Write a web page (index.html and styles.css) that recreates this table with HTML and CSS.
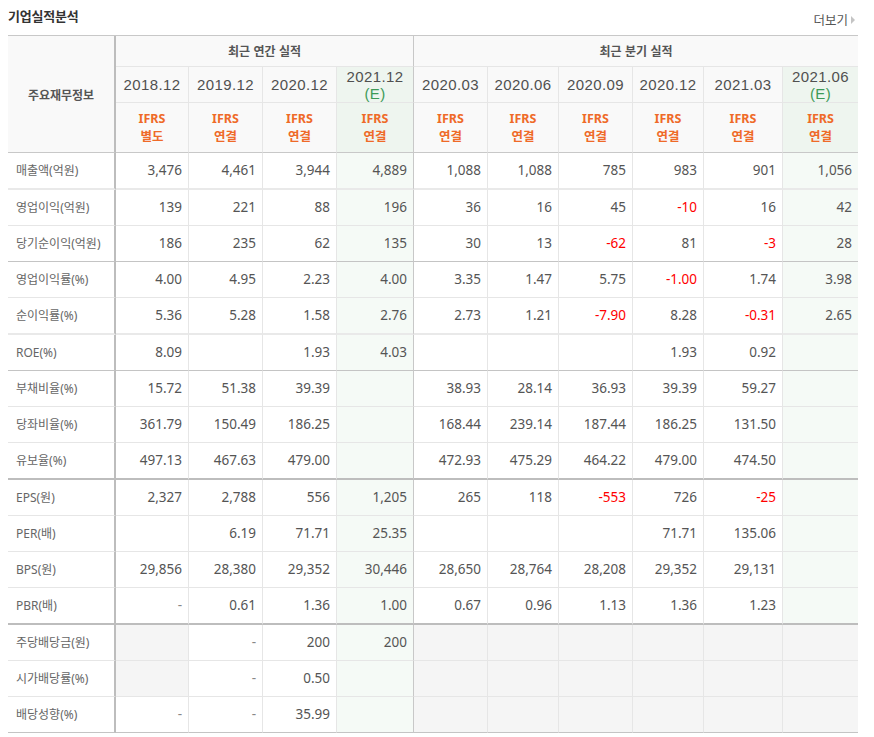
FILE: index.html
```html
<!DOCTYPE html>
<html lang="ko">
<head>
<meta charset="utf-8">
<title>기업실적분석</title>
<link rel="stylesheet" href="styles.css">
</head>
<body>
<div class="wrap">
  <div class="top">
    <h3 class="title">기업실적분석</h3>
    <a class="more">더보기<span class="tri"></span></a>
  </div>
  <table class="fin">
    <colgroup>
      <col style="width:108px"><col style="width:73px"><col style="width:74px"><col style="width:74px"><col style="width:77px">
      <col style="width:74px"><col style="width:71px"><col style="width:74px"><col style="width:71px"><col style="width:79px"><col style="width:75px">
    </colgroup>
    <thead>
      <tr class="h1">
        <th rowspan="3" class="corner">주요재무정보</th>
        <th colspan="4" class="grp">최근 연간 실적</th>
        <th colspan="6" class="grp last">최근 분기 실적</th>
      </tr>
      <tr class="h2">
        <th>2018.12</th><th>2019.12</th><th>2020.12</th><th class="e split"><div>2021.12</div><div class="est">(E)</div></th>
        <th>2020.03</th><th>2020.06</th><th>2020.09</th><th>2020.12</th><th>2021.03</th><th class="e last"><div>2021.06</div><div class="est">(E)</div></th>
      </tr>
      <tr class="h3">
        <th>IFRS<br>별도</th><th>IFRS<br>연결</th><th>IFRS<br>연결</th><th class="e split">IFRS<br>연결</th>
        <th>IFRS<br>연결</th><th>IFRS<br>연결</th><th>IFRS<br>연결</th><th>IFRS<br>연결</th><th>IFRS<br>연결</th><th class="e last">IFRS<br>연결</th>
      </tr>
    </thead>
    <tbody>
      <tr class="l2">
        <th>매출액(억원)</th><td>3,476</td><td>4,461</td><td>3,944</td><td class="e split">4,889</td>
        <td>1,088</td><td>1,088</td><td>785</td><td>983</td><td>901</td><td class="e last">1,056</td>
      </tr>
      <tr>
        <th>영업이익(억원)</th><td>139</td><td>221</td><td>88</td><td class="e split">196</td>
        <td>36</td><td>16</td><td>45</td><td class="neg">-10</td><td>16</td><td class="e last">42</td>
      </tr>
      <tr class="d1">
        <th>당기순이익(억원)</th><td>186</td><td>235</td><td>62</td><td class="e split">135</td>
        <td>30</td><td>13</td><td class="neg">-62</td><td>81</td><td class="neg">-3</td><td class="e last">28</td>
      </tr>
      <tr>
        <th>영업이익률(%)</th><td>4.00</td><td>4.95</td><td>2.23</td><td class="e split">4.00</td>
        <td>3.35</td><td>1.47</td><td>5.75</td><td class="neg">-1.00</td><td>1.74</td><td class="e last">3.98</td>
      </tr>
      <tr class="l2">
        <th>순이익률(%)</th><td>5.36</td><td>5.28</td><td>1.58</td><td class="e split">2.76</td>
        <td>2.73</td><td>1.21</td><td class="neg">-7.90</td><td>8.28</td><td class="neg">-0.31</td><td class="e last">2.65</td>
      </tr>
      <tr class="d1">
        <th>ROE(%)</th><td>8.09</td><td></td><td>1.93</td><td class="e split">4.03</td>
        <td></td><td></td><td></td><td>1.93</td><td>0.92</td><td class="e last"></td>
      </tr>
      <tr>
        <th>부채비율(%)</th><td>15.72</td><td>51.38</td><td>39.39</td><td class="e split"></td>
        <td>38.93</td><td>28.14</td><td>36.93</td><td>39.39</td><td>59.27</td><td class="e last"></td>
      </tr>
      <tr>
        <th>당좌비율(%)</th><td>361.79</td><td>150.49</td><td>186.25</td><td class="e split"></td>
        <td>168.44</td><td>239.14</td><td>187.44</td><td>186.25</td><td>131.50</td><td class="e last"></td>
      </tr>
      <tr class="d2">
        <th>유보율(%)</th><td>497.13</td><td>467.63</td><td>479.00</td><td class="e split"></td>
        <td>472.93</td><td>475.29</td><td>464.22</td><td>479.00</td><td>474.50</td><td class="e last"></td>
      </tr>
      <tr>
        <th>EPS(원)</th><td>2,327</td><td>2,788</td><td>556</td><td class="e split">1,205</td>
        <td>265</td><td>118</td><td class="neg">-553</td><td>726</td><td class="neg">-25</td><td class="e last"></td>
      </tr>
      <tr>
        <th>PER(배)</th><td></td><td>6.19</td><td>71.71</td><td class="e split">25.35</td>
        <td></td><td></td><td></td><td>71.71</td><td>135.06</td><td class="e last"></td>
      </tr>
      <tr>
        <th>BPS(원)</th><td>29,856</td><td>28,380</td><td>29,352</td><td class="e split">30,446</td>
        <td>28,650</td><td>28,764</td><td>28,208</td><td>29,352</td><td>29,131</td><td class="e last"></td>
      </tr>
      <tr class="d2">
        <th>PBR(배)</th><td class="dash">-</td><td>0.61</td><td>1.36</td><td class="e split">1.00</td>
        <td>0.67</td><td>0.96</td><td>1.13</td><td>1.36</td><td>1.23</td><td class="e last"></td>
      </tr>
      <tr>
        <th>주당배당금(원)</th><td class="g"></td><td class="dash">-</td><td>200</td><td class="e split">200</td>
        <td class="g"></td><td class="g"></td><td class="g"></td><td class="g"></td><td class="g"></td><td class="g last"></td>
      </tr>
      <tr>
        <th>시가배당률(%)</th><td class="g"></td><td class="dash">-</td><td>0.50</td><td class="e split"></td>
        <td class="g"></td><td class="g"></td><td class="g"></td><td class="g"></td><td class="g"></td><td class="g last"></td>
      </tr>
      <tr class="end">
        <th>배당성향(%)</th><td class="dash">-</td><td class="dash">-</td><td>35.99</td><td class="e split"></td>
        <td class="g"></td><td class="g"></td><td class="g"></td><td class="g"></td><td class="g"></td><td class="g last"></td>
      </tr>
    </tbody>
  </table>
</div>
</body>
</html>
```

FILE: styles.css
```css
body {
  margin: 8px;
  background: #fff;
  font-family: "Noto Sans", "Noto Sans CJK KR", sans-serif;
  color: #555;
}
.wrap {
  width: 850px;
}
.top {
  display: flex;
  justify-content: space-between;
  align-items: flex-start;
  height: 27px;
}
.title {
  margin: 0;
  font-family: "Noto Sans CJK KR", sans-serif;
  font-size: 13px;
  line-height: 15px;
  font-weight: 700;
  color: #333;
  letter-spacing: -0.2px;
}
.more {
  display: flex;
  align-items: center;
  margin-top: 5px;
  margin-right: 3px;
  font-family: "Noto Sans CJK KR", sans-serif;
  font-size: 12.5px;
  line-height: 14px;
  color: #555;
  text-decoration: none;
}
.tri {
  display: inline-block;
  width: 0;
  height: 0;
  margin-left: 3px;
  border-left: 4px solid #c4c4c4;
  border-top: 4px solid transparent;
  border-bottom: 4px solid transparent;
}
.fin {
  table-layout: fixed;
  width: 850px;
  border-collapse: separate;
  border-spacing: 0;
  border-top: 1px solid #c8c8c8;
}
.fin th,
.fin td {
  padding: 0;
  border-right: 1px solid #e6e6e6;
  border-bottom: 1px solid #e6e6e6;
  white-space: nowrap;
  overflow: hidden;
}
.fin thead th {
  background: #f9f9f9;
  text-align: center;
  font-weight: 400;
}
.fin thead th.e { background: #eef5ef; }
.fin .last { border-right: none; }
.fin .split { border-right: 1px solid #c8c8c8; }
.fin thead .corner {
  border-right: 2px solid #bdbdbd;
  border-bottom: 1px solid #c8c8c8;
  font-family: "Noto Sans CJK KR", sans-serif;
  font-size: 12px;
  font-weight: 700;
  color: #555;
  vertical-align: middle;
}
.fin .h1 th.grp {
  height: 30px;
  font-family: "Noto Sans CJK KR", sans-serif;
  font-size: 12px;
  font-weight: 700;
  color: #555;
  line-height: 30px;
}
.fin .h1 th.grp:nth-child(2) { border-right: 1px solid #c8c8c8; }
.fin .h2 th {
  height: 35px;
  font-family: "Liberation Sans", sans-serif;
  font-size: 15px;
  color: #505050;
  line-height: 17px;
  letter-spacing: 0.4px;
}
.fin .h2 th .est {
  color: #3d9a57;
}
.fin .h3 th {
  height: 49px;
  font-size: 12.5px;
  font-weight: 700;
  line-height: 17.5px;
  color: #ef6a28;
  border-bottom: 1px solid #c8c8c8;
}
.fin tbody th {
  text-align: left;
  padding-left: 8px;
  font-family: "Noto Sans", "Noto Sans CJK KR", sans-serif;
  font-size: 12px;
  font-weight: 400;
  color: #666;
  line-height: 35px;
  border-right: 2px solid #bdbdbd;
}
.fin tbody td {
  text-align: right;
  padding-right: 6px;
  font-size: 13.5px;
  line-height: 35px;
  color: #555;
}
.fin tbody td.e { background: #f5faf6; }
.fin tbody td.g { background: #f5f5f5; }
.fin tbody td.neg { color: #f00; }
.fin tbody td.dash { color: #888; }
.fin tbody tr.l2 > * { border-bottom: 2px solid #e9e9e9; }
.fin tbody tr.d1 > * { border-bottom: 1px solid #c4c4c4; }
.fin tbody tr.d2 > * { border-bottom: 2px solid #bdbdbd; }
.fin tbody tr.end > * { border-bottom: 1px solid #c4c4c4; }
```
